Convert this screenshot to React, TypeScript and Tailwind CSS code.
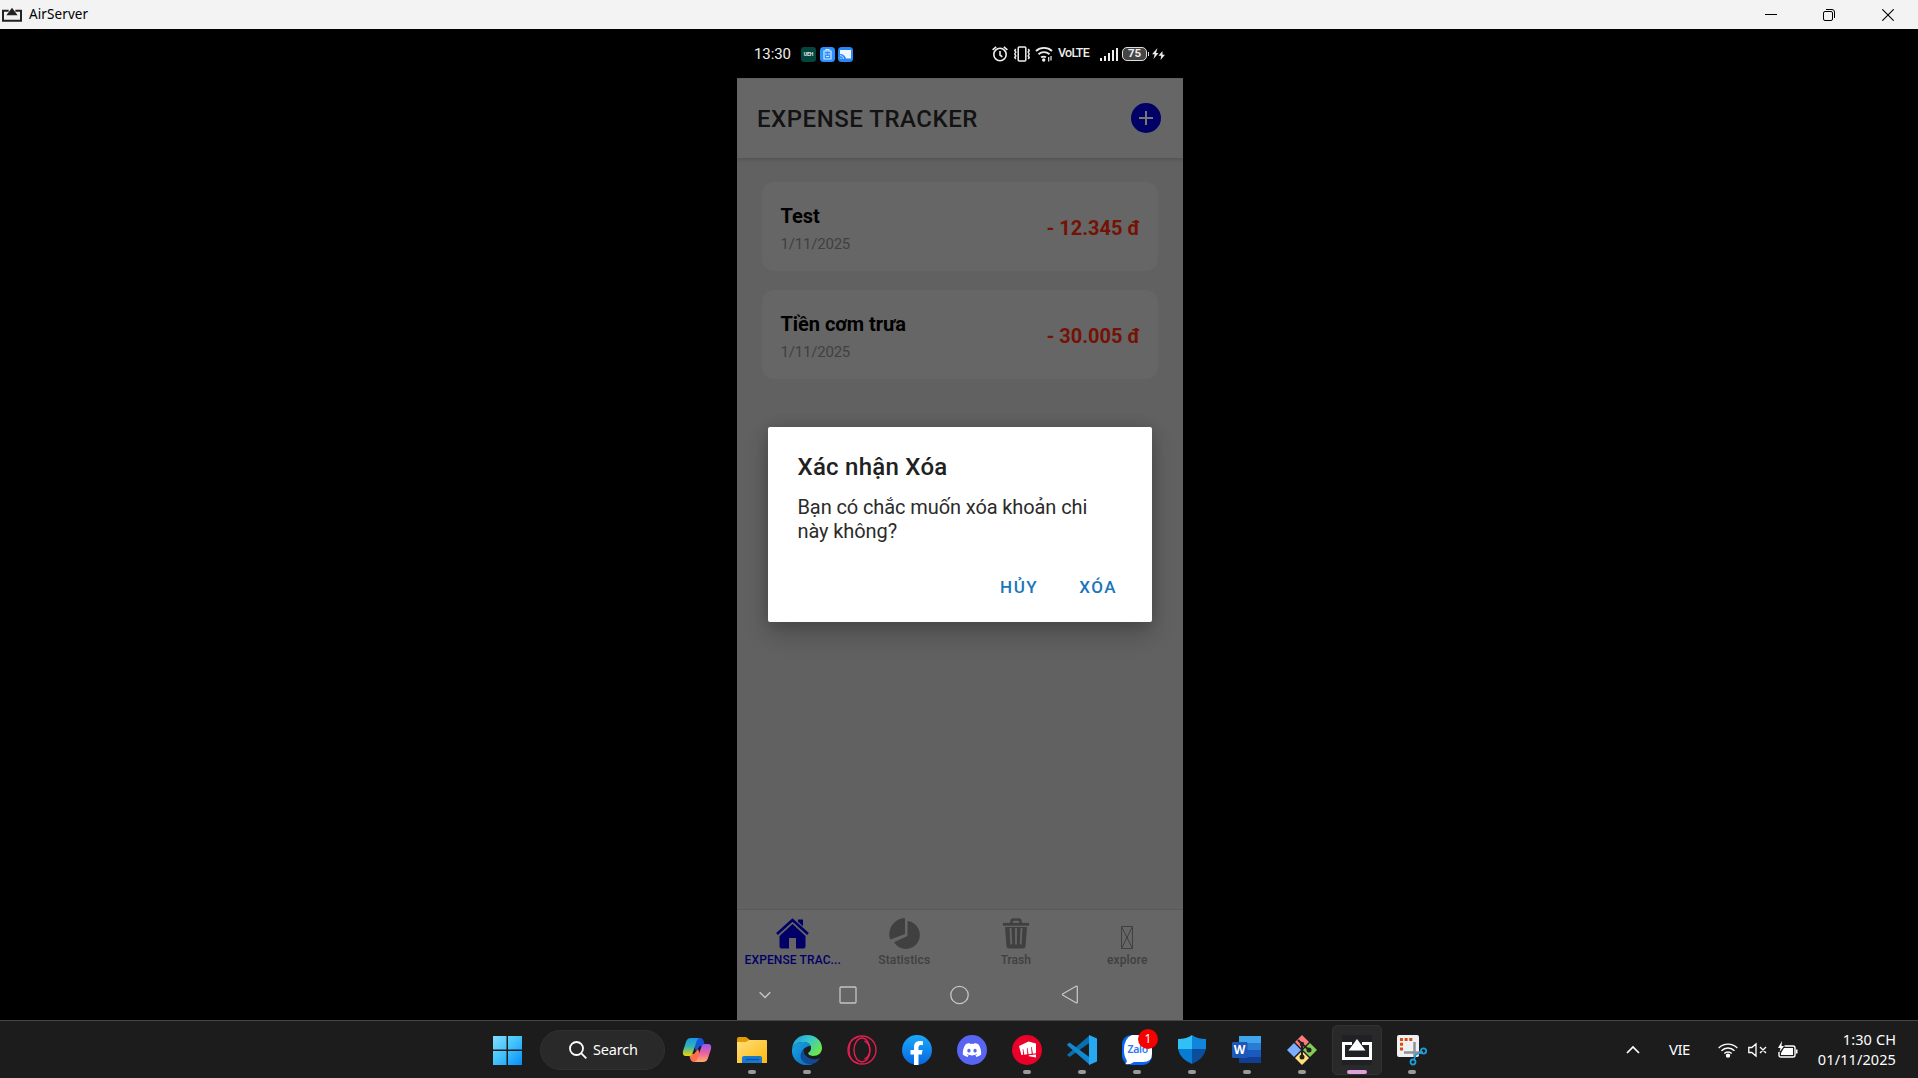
import React from "react";
import { FaDiscord } from "react-icons/fa6";
import { SiRiotgames } from "react-icons/si";

const expenses = [
  { name: "Test", date: "1/11/2025", amount: "- 12.345 đ" },
  { name: "Tiền cơm trưa", date: "1/11/2025", amount: "- 30.005 đ" },
];

function AirServerIcon({ className }: { className: string }) {
  return (
    <svg className={className} viewBox="0 0 30 22" fill="none">
      <path d="M10 4.5H1.5v15h27v-15H20" stroke="currentColor" strokeWidth="3" />
      <path d="M15 0l8.5 11.5h-17z" fill="currentColor" />
    </svg>
  );
}

function TitleBar() {
  return (
    <header className="flex h-[29px] shrink-0 items-center bg-[#f3f3f3] pl-0.5 text-black">
      <AirServerIcon className="h-4 w-5 text-[#222]" />
      <span className="ml-[7px] pt-px text-[13.5px] leading-none tracking-[0.1px]">AirServer</span>
      <div className="ml-auto flex items-center">
        <svg className="h-3 w-3" viewBox="0 0 12 12"><path d="M0 5.5h12" stroke="#000" /></svg>
        <svg className="ml-[46px] h-3 w-3" viewBox="0 0 12 12" fill="none" stroke="#000">
          <rect x=".5" y="2.5" width="9" height="9" rx="1.5" />
          <path d="M3 .5h6a2.5 2.5 0 0 1 2.5 2.5v6" />
        </svg>
        <svg className="mr-6 ml-[47px] h-3 w-3" viewBox="0 0 12 12" stroke="#000" strokeWidth="1.1"><path d="M.3.3l11.4 11.4M11.7.3L.3 11.7" /></svg>
      </div>
    </header>
  );
}

function StatusBar() {
  return (
    <div className="flex h-[49px] shrink-0 items-center bg-black pl-[17px] text-[#eee]">
      <span className="w-[38px] pt-0.5 text-[15px] tracking-[-0.1px]">13:30</span>
      <div className="ml-[9px] flex gap-[3.5px] pt-0.5">
        <span className="flex h-[15px] w-[15px] items-center justify-center rounded-[3px] bg-[#05453f] text-[5px] font-bold">UEH</span>
        <svg className="h-[15px] w-[15px]" viewBox="0 0 15 15" fill="none">
          <rect width="15" height="15" rx="3.5" fill="#2b91ff" />
          <path d="M4 4h7v8H4zM6 4V2.500h3V4M5.500 6.500l1 1m3-1l-1 1M6 9.500h3" stroke="#d6ebff" strokeWidth="1.200" />
        </svg>
        <svg className="h-[15px] w-[15px]" viewBox="0 0 15 15">
          <rect width="15" height="15" rx="3.5" fill="#2b86f5" />
          <path d="M2 3h11v8.500H8C7.500 9 5 7 2 7z" fill="#eef7ff" />
          <path d="M2 8.500a3.500 3.500 0 0 1 3.500 3.500M2 10.500l1.500 1.500" stroke="#bfe0ff" fill="none" />
        </svg>
      </div>
      <svg className="ml-[139px] h-[18px] w-4" viewBox="0 0 16 18" fill="none" stroke="currentColor" strokeWidth="1.6">
        <circle cx="8" cy="9.500" r="6.200" /><path d="M8 6v4l2.300 1.800M.6 4.800l3.600-3M15.400 4.800l-3.600-3" />
      </svg>
      <svg className="ml-1.5 h-[18px] w-4" viewBox="0 0 16 18" fill="none" stroke="currentColor" strokeWidth="1.5">
        <rect x="4.200" y="2" width="7.600" height="14" rx="1" /><path d="M1.700 4l-.9 1.500 1 1.500-1 2 1 2-1 1.500.9 1.500M14.300 4l.9 1.500-1 1.500 1 2-1 2 1 1.500-.9 1.500" />
      </svg>
      <svg className="ml-[5px] h-[18px] w-[18px]" viewBox="0 0 18 18" fill="none" stroke="currentColor" strokeWidth="1.800">
        <path d="M1 6a12 12 0 0 1 16 0M3.500 9.200a8.500 8.500 0 0 1 11 0M6 12.300a5 5 0 0 1 5 0" /><circle cx="8.700" cy="15" r=".8" fill="currentColor" /><path d="M13.700 12v4.500M16 11v4.500" strokeWidth="1.200" />
      </svg>
      <span className="ml-[5px] w-[30px] text-[12.5px] font-medium tracking-[-0.75px]">VoLTE</span>
      <svg className="ml-3 h-[14px] w-[18px]" viewBox="0 0 18 14" fill="currentColor">
        <path d="M0 11h2v3H0zM4 9h2v5H4zM8 6h2v8H8zM12 3h2v11h-2zM16 1h2v13h-2z" />
      </svg>
      <div className="ml-1 flex h-[14px] w-[25px] items-center justify-center rounded-[5px] border-[1.5px] border-[#ddd] bg-[#444] text-[11.5px] leading-none font-bold">75</div>
      <span className="ml-px h-1 w-px bg-[#ddd]" />
      <svg className="ml-[3px] h-3 w-[13px]" viewBox="0 0 13 12" fill="currentColor">
        <path d="M5.500 0L0 6.300h2.700L1.500 11l5-6H4z" /><path d="M10.500 3L6.500 7.800h2.700L8.500 12 13 6.800h-2.500z" />
      </svg>
    </div>
  );
}

function AppHeader() {
  return (
    <div className="relative z-10 flex h-[79.5px] shrink-0 items-center justify-between border-t border-[#5e5e5e] bg-[#666] pr-[22px] pl-5 shadow-[0_1px_4px_rgba(0,0,0,0.2)]">
      <h1 className="pt-px text-[24px] font-medium tracking-[0.52px] text-[#131313]">EXPENSE TRACKER</h1>
      <svg className="-mt-px h-[30px] w-[30px]" viewBox="0 0 30 30">
        <circle cx="15" cy="15" r="15" fill="#000066" />
        <path d="M15 8v14M8 15h14" stroke="#777" strokeWidth="2" />
      </svg>
    </div>
  );
}

function TabBar() {
  return (
    <nav className="grid h-[62px] shrink-0 grid-cols-4 border-t border-[#595959] text-center text-[12px] leading-[14px] font-medium text-[#404040]">
      <div className="flex flex-col items-center pt-2 text-[#000066]">
        <svg className="h-[31px] w-[33px]" viewBox="0 0 33 31">
          <path d="M3.500 18L16.500 6 29.500 18v10.500a2 2 0 0 1-2 2h-7.500V20h-7v10.500H5.500a2 2 0 0 1-2-2z" fill="currentColor" />
          <path d="M22 1.500h5V11l-5-4z" fill="currentColor" />
          <path d="M1 16.200L16.500 2 32 16.200" fill="none" stroke="#666" strokeWidth="5" />
          <path d="M1 16L16.500 2 32 16" fill="none" stroke="currentColor" strokeWidth="2.600" />
        </svg>
        <span className="mt-1 tracking-[0.12px]">EXPENSE TRAC...</span>
      </div>
      <div className="flex flex-col items-center pt-2">
        <svg className="h-[31px] w-[31px]" viewBox="0 0 31 31" fill="currentColor">
          <path d="M16 0v16L1.300 21.500A16 16 0 0 1 16 0z" /><path d="M18.500 3A14 14 0 1 1 5 24.300L18.500 18z" />
        </svg>
        <span className="mt-1 tracking-[0.15px]">Statistics</span>
      </div>
      <div className="flex flex-col items-center pt-2">
        <svg className="h-[31px] w-[26px]" viewBox="0 0 26 31" fill="none" stroke="currentColor">
          <path d="M8.500 6V3.500a2 2 0 0 1 2-2h5a2 2 0 0 1 2 2V6" strokeWidth="2.500" />
          <path d="M0 6.300h26" strokeWidth="2.800" />
          <path d="M2 9h22l-1.500 19a2.500 2.500 0 0 1-2.500 2.500H6A2.500 2.500 0 0 1 3.500 28z" fill="currentColor" stroke="none" />
          <path d="M7.500 10l.8 16.500M13 10v16.500M18.500 10l-.8 16.500" stroke="#666" strokeWidth="1.800" />
        </svg>
        <span className="mt-1">Trash</span>
      </div>
      <div className="flex flex-col items-center pt-4">
        <svg className="h-[23px] w-3" viewBox="0 0 12 23" fill="none" stroke="currentColor">
          <path d="M.5.500h11v22H.5zM.5.500l11 22M11.500.500l-11 22" />
        </svg>
        <span className="mt-1 tracking-[0.15px]">explore</span>
      </div>
    </nav>
  );
}

function SystemNav() {
  return (
    <div className="flex h-[49px] shrink-0 items-center pb-[1.5px] pl-[22px] text-[#c4c4c4]">
      <svg className="h-3 w-3" viewBox="0 0 12 12" fill="none" stroke="currentColor" strokeWidth="1.500"><path d="M.7 3.200L6 8.500l5.300-5.300" /></svg>
      <svg className="ml-[68px] h-[18px] w-[18px]" viewBox="0 0 18 18" fill="none" stroke="currentColor" strokeWidth="1.300"><rect x="1" y="1" width="16" height="16" rx="1" /></svg>
      <svg className="ml-[93px] h-5 w-5" viewBox="0 0 20 20" fill="none" stroke="currentColor" strokeWidth="1.300"><circle cx="9.500" cy="10" r="8.700" /></svg>
      <svg className="ml-[91px] h-[19px] w-[18px]" viewBox="0 0 18 19" fill="none" stroke="currentColor" strokeWidth="1.300"><path d="M2 8.700L15 1.300q1.300-.6 1.300 1v14.400q0 1.600-1.300 1L2 10.300q-1-.8 0-1.600z" /></svg>
    </div>
  );
}

function ConfirmDialog() {
  return (
    <div className="absolute top-[398px] left-[31px] flex h-[195px] w-[384px] flex-col rounded-[2px] bg-white pt-[26px] pl-[29.5px] shadow-[0_12px_24px_rgba(0,0,0,0.22),0_0_14px_rgba(0,0,0,0.14)]">
      <h2 className="text-[24px] leading-7 font-medium tracking-[0.25px] text-[#212121]">Xác nhận Xóa</h2>
      <p className="mt-[15px] w-[310px] text-[20px] leading-[23.700px] tracking-[-0.100px] text-[#2b2b2b]">Bạn có chắc muốn xóa khoản chi này không?</p>
      <div className="mt-[34px] flex justify-end pr-[35px] text-[17px] leading-5 font-medium tracking-[1.500px] text-[#1976ba]">
        <button className="mr-[41px]">HỦY</button>
        <button>XÓA</button>
      </div>
    </div>
  );
}

function Phone() {
  return (
    <section className="relative flex w-[446px] flex-col overflow-hidden bg-[#666] font-['Roboto',sans-serif]">
      <StatusBar />
      <AppHeader />
      <main className="flex grow flex-col gap-[19px] bg-[#616161] px-[25px] pt-[24.5px]">
        {expenses.map((e) => (
          <article key={e.name} className="flex h-[89px] items-center justify-between rounded-xl bg-[#666] pr-[18px] pl-[18.500px]">
            <div className="pt-[3px]">
              <h3 className="text-[20px] leading-6 font-bold tracking-[-0.05px] text-black">{e.name}</h3>
              <p className="mt-[7px] text-[15px] leading-[18px] tracking-[-0.2px] text-[#404040]">{e.date}</p>
            </div>
            <strong className="pt-0.5 text-[20px] text-[#741205]">{e.amount}</strong>
          </article>
        ))}
      </main>
      <TabBar />
      <SystemNav />
      <ConfirmDialog />
    </section>
  );
}

const Copilot = () => (
  <svg viewBox="0 0 30 30">
    <defs>
      <linearGradient id="cp1" x1="0" y1="0" x2="0" y2="1"><stop stopColor="#1797e8" /><stop offset=".5" stopColor="#37b6ae" /><stop offset="1" stopColor="#f5d400" /></linearGradient>
      <linearGradient id="cp2" x1="0" y1="0" x2="0" y2="1"><stop stopColor="#9a55ee" /><stop offset=".55" stopColor="#f0659c" /><stop offset="1" stopColor="#ffad67" /></linearGradient>
    </defs>
    <path d="M9 3h9q3 0 4 4l1 4h-5l-4 5z" fill="#1754d8" />
    <path d="M21 27h-9q-3 0-4-4l-1-4h5l4-5z" fill="#fa7050" />
    <path d="M9 3h8q-2 1-3 5l-3 9q-1 4-4 4H4q-4 0-3-5L4 7q1-4 5-4z" fill="url(#cp1)" />
    <path d="M21 27h-8q2-1 3-5l3-9q1-4 4-4h3q4 0 3 5l-3 9q-1 4-5 4z" fill="url(#cp2)" />
  </svg>
);

const Explorer = () => (
  <svg viewBox="0 0 30 30">
    <defs><linearGradient id="fo" x1="0" y1="0" x2="1" y2="1"><stop stopColor="#ffdf7b" /><stop offset="1" stopColor="#ffb80c" /></linearGradient></defs>
    <path d="M0 4q0-2 2-2h7l4 3v6H0z" fill="#e09b05" />
    <path d="M0 7h9l3-2h17q1 0 1 1v22H0z" fill="url(#fo)" />
    <path d="M5 28v-5q0-2 2-2h16q2 0 2 2v5z" fill="#1579ce" /><path d="M9 24.500h13" stroke="#0752a0" strokeWidth="1.300" />
  </svg>
);

const Edge = () => (
  <svg viewBox="0 0 30 30">
    <defs>
      <linearGradient id="ed1" x1="0" y1="0" x2="1" y2=".6"><stop stopColor="#1897dc" /><stop offset=".5" stopColor="#36c5d0" /><stop offset="1" stopColor="#6be64d" /></linearGradient>
      <linearGradient id="ed2" x1="0" y1="0" x2="1" y2="1"><stop stopColor="#1aa4e4" /><stop offset="1" stopColor="#0867bd" /></linearGradient>
    </defs>
    <path d="M0 14C1 5 7 0 15 0c9 0 15 6 15 13 0 5-4 8-9 8-3 0-5-1-5-3 2-1 3-3 3-5 0-4-4-6-8-6C6 7 2 9 0 14z" fill="url(#ed1)" />
    <path d="M0 14C2 9 6 7 11 7c4 0 8 2 8 6-4-2-9 0-9 6 0 7 6 10 11 10-2 1-4 1-6 1C6 30-1 23 0 14z" fill="url(#ed2)" />
    <path d="M12 14c-1 5 3 9 8 10 3 1 5 0 8-1-2 4-7 7-12 6-8-2-10-10-4-15z" fill="#114b96" />
    <path d="M19 11c0 3-3 4-3 7 0 2 2 3 5 3-5 2-9-1-9-5 0-3 3-5 7-5z" fill="#1c1c1c" />
  </svg>
);

const Opera = () => (
  <svg viewBox="0 0 30 30" fill="none" stroke="#e01e50" strokeWidth="1.400">
    <circle cx="15" cy="15" r="14" /><ellipse cx="15" cy="15" rx="8" ry="12" /><path d="M11 2C5 3 2 8 2 15s3 12 9 13" /><path d="M17.500 6c7 3 7 15 0 18" />
  </svg>
);

const Facebook = () => (
  <svg viewBox="0 0 30 30">
    <defs><linearGradient id="fb" x1="0" y1="0" x2="0" y2="1"><stop stopColor="#19a9fb" /><stop offset="1" stopColor="#0866e0" /></linearGradient></defs>
    <circle cx="15" cy="15" r="15" fill="url(#fb)" />
    <path d="M12 30V19.500H8.500V15H12v-3c0-4 2.300-6 6-6 1.500 0 3 .300 3 .300V10h-2c-2 0-2.500 1-2.500 2.300V15h4l-.7 4.500h-3.300V30z" fill="#fff" />
  </svg>
);

const Discord = () => (
  <span className="flex h-[30px] w-[30px] items-center justify-center rounded-full bg-[#5865f2]"><FaDiscord className="h-[20px] w-[20px] text-white" /></span>
);

const Riot = () => (
  <span className="flex h-[30px] w-[30px] items-center justify-center rounded-full bg-[#eb0029]"><SiRiotgames className="h-[17px] w-[17px] text-white" /></span>
);

const VSCode = () => (
  <svg viewBox="0 0 30 30">
    <path d="M0 20l2.500 2L23 7.500V0L1 19z" fill="#0870b1" />
    <path d="M0 9.500l2.500-2L23 22.500V30L1 11z" fill="#1187cf" />
    <path d="M22 0l8 3.500v23L22 30z" fill="#27a9f2" />
  </svg>
);

const Zalo = () => (
  <div className="relative h-[30px] w-[30px]">
    <svg viewBox="0 0 30 30">
      <rect width="30" height="30" rx="9" fill="#0766f5" />
      <path d="M10 0h11q9 0 9 9v10q0 8-9 8h-9q-4 3-9 2 3-2 1-5-2-3-2-9Q2 3 10 0z" fill="#fff" />
    </svg>
    <span className="absolute top-[6px] left-[5.500px] text-[10.500px] leading-4 font-semibold tracking-[-0.3px] text-[#2b7cf2]">Zalo</span>
    <span className="absolute -top-[6px] left-4 flex h-5 w-5 items-center justify-center rounded-full bg-[#f70000] text-[12px] leading-none text-white">1</span>
  </div>
);

const Defender = () => (
  <svg viewBox="0 0 30 30">
    <path d="M15 0q5 4 14 4v10H15z" fill="#0f85dc" /><path d="M15 0Q10 4 1 4v10h14z" fill="#31c0f4" />
    <path d="M1 14h14v15Q3 24 1 14z" fill="#087cd4" /><path d="M29 14H15v15q12-5 14-15z" fill="#0a4e9c" />
  </svg>
);

const Word = () => (
  <div className="relative h-[30px] w-[30px]">
    <svg viewBox="0 0 30 30">
      <path d="M7 1h22v7H7z" fill="#41a5ee" /><path d="M7 8h22v7H7z" fill="#2b7cd3" /><path d="M7 15h22v7H7z" fill="#185abd" /><path d="M7 22h22v6H7z" fill="#103f91" />
      <rect y="7" width="15.500" height="16" rx="1.200" fill="#1c58b8" />
    </svg>
    <span className="absolute top-[7px] left-0 w-[15px] text-center text-[12px] leading-4 font-bold text-white">W</span>
  </div>
);

const Git = () => (
  <svg viewBox="0 0 30 30">
    <path d="M15 0l7 7-7 7-7-7z" fill="#ff7b7b" /><path d="M23 8l7 7-7 7-7-7z" fill="#88cc58" /><path d="M15 16l7 7-7 7-7-7z" fill="#ffe17c" /><path d="M7 8l7 7-7 7-7-7z" fill="#7caeff" />
    <path d="M11 5l4 4v13M15 9l7 6" stroke="#222" strokeWidth="2" fill="none" /><circle cx="15" cy="9" r="2.200" fill="#222" /><circle cx="22" cy="15" r="2.500" fill="#222" /><circle cx="15" cy="22" r="2.500" fill="#222" />
  </svg>
);

const AirServerTask = () => (
  <span className="flex h-[30px] w-[30px] items-center bg-[#202124]"><AirServerIcon className="h-[22px] w-[30px] text-white" /></span>
);

const Snip = () => (
  <svg viewBox="0 0 30 30" className="overflow-visible">
    <rect width="22" height="22" rx="2" fill="#eef0f2" />
    <path d="M4.500 15.500v-11h11" fill="none" stroke="#dc4a13" strokeWidth="3" strokeDasharray="3 1.700" />
    <path d="M7 17.500h19M17.500 7v15" stroke="#8c9298" strokeWidth="2.500" />
    <circle cx="26.500" cy="16" r="2.700" fill="none" stroke="#1c9ade" strokeWidth="1.800" /><circle cx="16" cy="27" r="2.500" fill="none" stroke="#1c9ade" strokeWidth="1.800" />
    <path d="M17 24.500l2-5 5-2" stroke="#1c9ade" strokeWidth="1.600" fill="none" />
  </svg>
);

const taskApps = [
  { id: "copilot", Icon: Copilot, state: "closed" },
  { id: "explorer", Icon: Explorer, state: "open" },
  { id: "edge", Icon: Edge, state: "open" },
  { id: "opera", Icon: Opera, state: "closed" },
  { id: "facebook", Icon: Facebook, state: "closed" },
  { id: "discord", Icon: Discord, state: "closed" },
  { id: "riot", Icon: Riot, state: "open" },
  { id: "vscode", Icon: VSCode, state: "open" },
  { id: "zalo", Icon: Zalo, state: "open" },
  { id: "defender", Icon: Defender, state: "open" },
  { id: "word", Icon: Word, state: "open" },
  { id: "git", Icon: Git, state: "open" },
  { id: "airserver", Icon: AirServerTask, state: "active" },
  { id: "snip", Icon: Snip, state: "open" },
];

function Taskbar() {
  return (
    <footer className="flex h-[58px] shrink-0 items-center border-t border-[#454545] bg-[#1c1c1c] pl-[492px] text-white">
      <svg className="h-[30px] w-[30px]" viewBox="0 0 30 30">
        <defs><linearGradient id="win" gradientUnits="userSpaceOnUse" x1="1" y1="1" x2="29" y2="29"><stop stopColor="#82ddff" /><stop offset=".5" stopColor="#43c3fb" /><stop offset="1" stopColor="#0892f8" /></linearGradient></defs>
        <path d="M1 1h13.500v13.500H1zM16 1h14v13.500H16zM1 16h13.500v14H1zM16 16h14v14H16z" fill="url(#win)" />
      </svg>
      <div className="ml-[18px] flex h-10 w-[125px] items-center rounded-full border border-[#303030] bg-[#292929] pl-7">
        <svg className="h-[18px] w-[18px]" viewBox="0 0 18 18" fill="none" stroke="#fff" strokeWidth="1.800"><circle cx="7.500" cy="7.500" r="6.500" /><path d="M12.300 12.300l5 5" /></svg>
        <span className="ml-1.5 pt-px text-[14.5px] tracking-[-0.2px]">Search</span>
      </div>
      <div className="ml-3 flex h-[50px] gap-[15px]">
        {taskApps.map(({ id, Icon, state }) => (
          <div
            key={id}
            className={
              state === "active"
                ? "-mx-[5px] flex w-[50px] flex-col items-center rounded-[5px] border border-[#323232] bg-[#292929] pt-[9px]"
                : "-mx-[5px] flex w-[50px] flex-col items-center pt-2.5"
            }
          >
            <div className="h-[30px] w-[30px]"><Icon /></div>
            {state === "open" && <span className="mt-[5px] h-1 w-2 rounded-full bg-[#9a9a9a]" />}
            {state === "active" && <span className="mt-[5px] h-1 w-5 rounded-full bg-[#dda0dd]" />}
          </div>
        ))}
      </div>
      <div className="ml-auto flex items-center pr-[22px]">
        <svg className="h-3.5 w-3.5" viewBox="0 0 14 14" fill="none" stroke="#fff" strokeWidth="1.700"><path d="M1 10l6-6 6 6" /></svg>
        <span className="ml-[29px] w-[22px] text-[15px] tracking-[-0.5px]">VIE</span>
        <svg className="ml-[27px] h-4 w-5" viewBox="0 0 20 16" fill="none" stroke="#fff" strokeWidth="1.400"><path d="M.7 6a13 13 0 0 1 18.600 0M3.500 8.800a9 9 0 0 1 13 0M6.300 11.600a5.200 5.200 0 0 1 7.400 0" /><circle cx="10" cy="13.600" r="1.500" fill="#fff" /></svg>
        <svg className="ml-2.5 h-4 w-[19px]" viewBox="0 0 19 16" fill="none" stroke="#fff" strokeWidth="1.300"><path d="M.8 5.500h3L8 2v12l-4.200-3.500h-3zM12 5l6 6M18 5l-6 6" /></svg>
        <svg className="ml-[11px] h-[18px] w-5" viewBox="0 0 20 18" fill="none" stroke="#fff" strokeWidth="1.400">
          <path d="M6.500 5H15q2 0 2 2v7q0 2-2 2H3q-2 0-2-2v-3" /><path d="M6 7h9v7H3v-2z" fill="#fff" stroke="none" /><path d="M18 8.500h1.500v4H18z" fill="#fff" stroke="none" /><path d="M4 0L0 7h2.500L1.500 11 6 5H3.500z" fill="#fff" stroke="none" />
        </svg>
        <div className="ml-3 w-[86px] pb-px text-right text-[14.5px] leading-5 tracking-[0.1px]"><div>1:30 CH</div><div>01/11/2025</div></div>
      </div>
    </footer>
  );
}

export default function App() {
  return (
    <div className="flex h-screen w-full flex-col overflow-hidden bg-black font-['Noto_Sans','Open_Sans',sans-serif]">
      <TitleBar />
      <div className="flex min-h-0 grow pl-[737px]"><Phone /></div>
      <Taskbar />
    </div>
  );
}
